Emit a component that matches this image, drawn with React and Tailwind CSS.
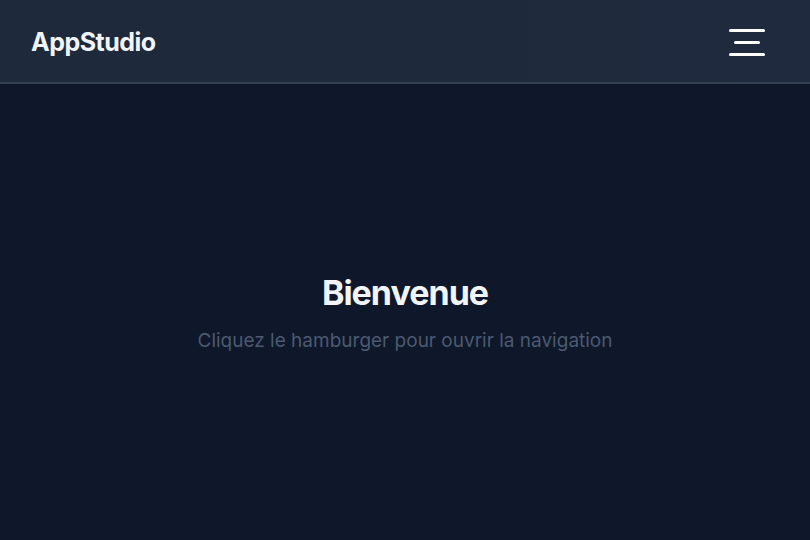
import React from 'react';

export default function App() {
  return (
    <div className="min-h-screen h-[540px] flex flex-col bg-[#0f172a]" style={{ fontFamily: 'Inter, "Noto Sans", sans-serif' }}>
      <header className="h-[84px] shrink-0 flex items-center justify-between pl-[31px] pr-[45px] pt-[3px] bg-gradient-to-r from-[#1e293b] to-[#1f2a3e] border-b-2 border-[#334155]">
        <div className="text-[25px] font-bold text-[#f1f5f9] tracking-[-0.5px]">AppStudio</div>
        <button className="flex flex-col items-center gap-[9px] w-[36px]" aria-label="menu">
          <span className="block h-[3px] w-[36px] rounded-full bg-white"></span>
          <span className="block h-[3px] w-[26px] rounded-full bg-white"></span>
          <span className="block h-[3px] w-[36px] rounded-full bg-white"></span>
        </button>
      </header>
      <main className="flex-1 flex flex-col items-center justify-center">
        <h1 className="text-[34px] font-bold text-[#f1f5f9] tracking-[-1px] leading-tight mt-[3px]">Bienvenue</h1>
        <p className="mt-[13px] text-[19px] text-[#4b5a70]">Cliquez le hamburger pour ouvrir la navigation</p>
      </main>
    </div>
  );
}
